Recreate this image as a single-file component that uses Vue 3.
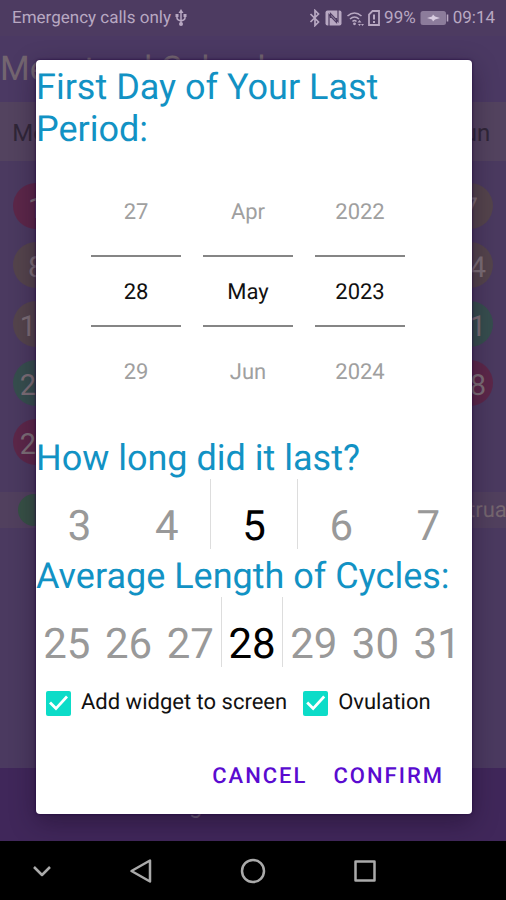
<template>
  <div class="phone">
    <header class="status-bar">
      <span>Emergency calls only</span>
      <svg class="usb" width="12" height="18" viewBox="0 0 12 18">
        <path d="M6 2v13M2 6v3q0 2 4 3M10 6v3q0 2-4 3" fill="none" stroke="currentColor" stroke-width="1.5" />
        <path d="M6 0l2.5 4h-5zM.5 5h3v3h-3zM8.500 5h3v3h-3z" fill="currentColor" />
        <circle cx="6" cy="15" r="2" fill="currentColor" />
      </svg>
      <div class="status-icons">
        <svg width="12" height="18" viewBox="0 0 12 18">
          <path d="M1.500 5l8 8L6 16.500v-15L9.500 5l-8 8" fill="none" stroke="currentColor" stroke-width="1.700" />
        </svg>
        <svg width="17" height="18" viewBox="0 0 17 18">
          <rect x="0.500" y="1.500" width="16" height="15" rx="2" fill="currentColor" />
          <path d="M4 17V5.500l7.500 8V9M13 1v11.500l-7.500-8V9" fill="none" stroke="#4d3b61" stroke-width="1.200" />
        </svg>
        <svg width="18" height="18" viewBox="0 0 18 18">
          <path d="M1.500 7q7-6 14 0M4 10q4.500-4 9 0M6.500 12.500q2-2 4 0" fill="none" stroke="currentColor" stroke-width="1.600" />
          <circle cx="8.500" cy="14.800" r="1.400" fill="currentColor" />
          <path d="M13.500 11l-2 2.500h4zM13.500 17l-1.500-2h3zM16.500 17l-1.500-2h3z" fill="currentColor" />
        </svg>
        <svg width="12" height="18" viewBox="0 0 12 18">
          <path d="M4.500 2H11v14H1V5.500z" fill="none" stroke="currentColor" stroke-width="1.800" />
          <path d="M6 5.500v5M6 12v2" stroke="currentColor" stroke-width="2" />
        </svg>
        <span>99%</span>
        <svg class="battery" width="29" height="18" viewBox="0 0 29 18">
          <rect x="0.500" y="2" width="25.500" height="14" rx="2.500" fill="currentColor" opacity="0.6" />
          <path d="M27.500 5.500v7" stroke="currentColor" stroke-width="1.600" />
          <path d="M7 9l5-1.500 1-2 2 2L20 9l-5 1.500-2 2-1-2z" fill="#d8cce0" />
        </svg>
        <span>09:14</span>
      </div>
    </header>

    <main class="calendar">
      <h1>Menstrual Calendar</h1>
      <div class="weekdays">
        <span v-for="name in weekdays" :key="name">{{ name }}</span>
      </div>
      <div class="days">
        <span v-for="n in 29" :key="n" class="day" :class="dayKind(n)">{{ n }}</span>
      </div>
      <div class="legend">
        <span class="legend-dot"></span>
        <span class="legend-end">Menstruation</span>
      </div>
    </main>
    <footer class="bottom-bar">
      <a href="#legend">Legend of Colours</a>
    </footer>

    <nav class="nav-bar">
      <button type="button" aria-label="Hide">
        <svg width="20" height="24" viewBox="0 0 20 24"><path d="M2 8l8 8 8-8" /></svg>
      </button>
      <button type="button" aria-label="Back">
        <svg width="24" height="26" viewBox="0 0 24 26"><path d="M21 2.500v21L2.500 13z" /></svg>
      </button>
      <button type="button" aria-label="Home">
        <svg width="26" height="26" viewBox="0 0 26 26"><circle cx="13" cy="13" r="11" /></svg>
      </button>
      <button type="button" aria-label="Recent apps">
        <svg width="24" height="24" viewBox="0 0 24 24"><path d="M2.500 2.500h19v19h-19z" /></svg>
      </button>
    </nav>

    <div class="overlay">
      <form class="dialog" role="dialog" @submit.prevent>
        <h2>First Day of Your Last Period:</h2>
        <div class="date-picker">
          <div v-for="col in dateColumns" :key="col.name" class="date-col" role="group" :aria-label="col.name">
            <button type="button" class="date-value" @click="col.selected--">{{ col.format(col.selected - 1) }}</button>
            <output class="date-value current">{{ col.format(col.selected) }}</output>
            <button type="button" class="date-value" @click="col.selected++">{{ col.format(col.selected + 1) }}</button>
          </div>
        </div>

        <h2>How long did it last?</h2>
        <div class="number-picker">
          <button
            v-for="n in around(duration, 2)"
            :key="n"
            type="button"
            :class="{ current: n === duration }"
            @click="duration = n"
          >{{ n }}</button>
        </div>

        <h2>Average Length of Cycles:</h2>
        <div class="number-picker cycles">
          <button
            v-for="n in around(cycle, 3)"
            :key="n"
            type="button"
            :class="{ current: n === cycle }"
            @click="cycle = n"
          >{{ n }}</button>
        </div>

        <div class="options">
          <label><input v-model="addWidget" type="checkbox" />Add widget to screen</label>
          <label><input v-model="ovulation" type="checkbox" />Ovulation</label>
        </div>
        <div class="actions">
          <button type="button">CANCEL</button>
          <button type="submit">CONFIRM</button>
        </div>
      </form>
    </div>
  </div>
</template>

<script setup>
import { reactive, ref } from 'vue';

const weekdays = ['Mon', 'Tue', 'Wed', 'Thu', 'Fri', 'Sat', 'Sun'];
const months = ['Jan', 'Feb', 'Mar', 'Apr', 'May', 'Jun', 'Jul', 'Aug', 'Sep', 'Oct', 'Nov', 'Dec'];

const wrap = (n, size) => ((n % size) + size) % size;

const dateColumns = reactive([
  { name: 'Day', selected: 28, format: (n) => wrap(n - 1, 31) + 1 },
  { name: 'Month', selected: 4, format: (n) => months[wrap(n, 12)] },
  { name: 'Year', selected: 2023, format: (n) => n },
]);

const duration = ref(5);
const cycle = ref(28);
const addWidget = ref(true);
const ovulation = ref(true);

const around = (value, reach) => {
  return Array.from({ length: reach * 2 + 1 }, (_, i) => value - reach + i);
};

const dayKind = (n) => {
  if (n <= 5 || n >= 28) return 'period';
  if (n >= 19 && n <= 24) return 'fertile';
  return 'plain';
};
</script>

<style>
body {
  margin: 0;
  background: #000;
}
</style>

<style scoped>
.phone {
  position: relative;
  display: flex;
  flex-direction: column;
  min-height: 100vh;
  overflow: hidden;
  font-family: Roboto, sans-serif;
  text-rendering: geometricPrecision;
  background: #4b3a60;
}

h1,
h2 {
  margin: 0;
  font-weight: 400;
}

button {
  padding: 0;
  border: 0;
  background: none;
  font-family: inherit;
  text-rendering: inherit;
  cursor: pointer;
}

.status-bar {
  display: flex;
  align-items: center;
  height: 36px;
  padding: 0 11px 0 12px;
  font-size: 17px;
  color: #b8a8c2;
  background: #4d3b61;
}

.usb {
  margin-left: 4px;
}

.status-icons {
  display: flex;
  align-items: center;
  gap: 4px;
  margin-left: auto;
}

.calendar {
  flex: 1;
}

h1 {
  height: 66px;
  font-size: 34px;
  line-height: 66px;
  white-space: nowrap;
  color: #736570;
  background: #4b3963;
}

.weekdays {
  display: grid;
  grid-template-columns: repeat(7, 1fr);
  height: 59px;
  line-height: 63px;
  font-size: 24px;
  text-align: center;
  color: #302638;
  background: #53435f;
}

.days {
  display: grid;
  grid-template-columns: repeat(7, 1fr);
  justify-items: center;
  gap: 13px 0;
  padding-top: 22px;
}

.day {
  width: 46px;
  height: 46px;
  border-radius: 50%;
  font-size: 29px;
  line-height: 52px;
  text-align: center;
  color: #7c6e76;
}

.day.period {
  background: #5c2749;
}

.day.plain {
  background: #54444c;
}

.day.fertile {
  background: #364e4e;
}

.legend {
  display: flex;
  align-items: center;
  height: 36px;
  margin-top: 27px;
  padding-left: 18px;
  font-size: 22px;
  white-space: nowrap;
  color: #75666f;
  background: #51405e;
}

.legend-dot {
  width: 32px;
  height: 32px;
  border-radius: 50%;
  background: #365045;
}

.legend-end {
  margin: 0 -38px 0 auto;
}

.bottom-bar {
  display: flex;
  align-items: center;
  justify-content: center;
  height: 73px;
  padding-left: 16px;
  box-sizing: border-box;
  background: #40275a;
}

.bottom-bar a {
  font-size: 24px;
  color: #6a5a78;
  text-decoration: none;
}

.nav-bar {
  display: grid;
  grid-template-columns: 3fr 4fr 4fr 4fr 3fr;
  height: 59px;
  background: #000;
}

.nav-bar button {
  display: flex;
  align-items: center;
  justify-content: center;
}

.nav-bar path,
.nav-bar circle {
  fill: none;
  stroke: #aaa;
  stroke-width: 2.500;
  stroke-linejoin: round;
}

.overlay {
  position: absolute;
  inset: 0;
  padding: 60px 34px 0 36px;
}

.dialog {
  padding: 6px 0 12px;
  border-radius: 4px;
  background: #fff;
  box-shadow: 0 0 3px rgba(30, 0, 60, 0.9), 0 8px 26px rgba(20, 5, 30, 0.4);
}

h2 {
  font-size: 36px;
  line-height: 42px;
  color: #1292c4;
}

.date-picker {
  display: flex;
  justify-content: center;
  gap: 22px;
  padding: 23px 12px 28px 0;
}

.date-col {
  display: flex;
  flex-direction: column;
  width: 90px;
}

.date-value {
  box-sizing: border-box;
  height: 82px;
  padding-top: 8px;
  font-size: 22px;
  text-align: center;
  color: #a0a0a0;
}

.date-value:first-child {
  padding: 0 0 4px;
}

.date-value.current {
  height: 72px;
  padding: 0;
  border-top: 2px solid #858585;
  border-bottom: 2px solid #858585;
  line-height: 72px;
  color: #111;
}

.number-picker {
  display: flex;
  height: 70px;
  margin-bottom: 6px;
}

.number-picker button {
  flex: 1;
  border: solid transparent;
  border-width: 0 1px;
  padding-top: 24px;
  font-size: 42px;
  line-height: 48px;
  color: #999;
}

.number-picker .current {
  border-color: #ddd;
  color: #000;
}

.number-picker.cycles {
  margin-bottom: 23px;
  padding-right: 4px;
}

.options {
  display: flex;
  align-items: center;
  gap: 16px;
  padding-left: 10px;
  font-size: 22px;
  line-height: 26px;
  color: #111;
  white-space: nowrap;
}

.options label {
  display: flex;
  align-items: center;
  gap: 10px;
}

.options input {
  width: 25px;
  height: 25px;
  margin: 0;
  border: 2px solid #757575;
  border-radius: 2px;
  appearance: none;
}

.options input:checked {
  border: 0;
  background: #0cdcc8;
}

.options input:checked::before {
  content: '';
  display: block;
  width: 25px;
  height: 25px;
  background: #fff;
  clip-path: polygon(3px 13px, 5px 11px, 10px 16px, 20px 5px, 22px 7px, 10px 20px);
}

.actions {
  display: flex;
  justify-content: flex-end;
  gap: 26px;
  padding: 34px 28px 0 0;
}

.actions button {
  height: 52px;
  font-size: 22px;
  font-weight: 500;
  letter-spacing: 2px;
  color: #5a0bd0;
}
</style>
